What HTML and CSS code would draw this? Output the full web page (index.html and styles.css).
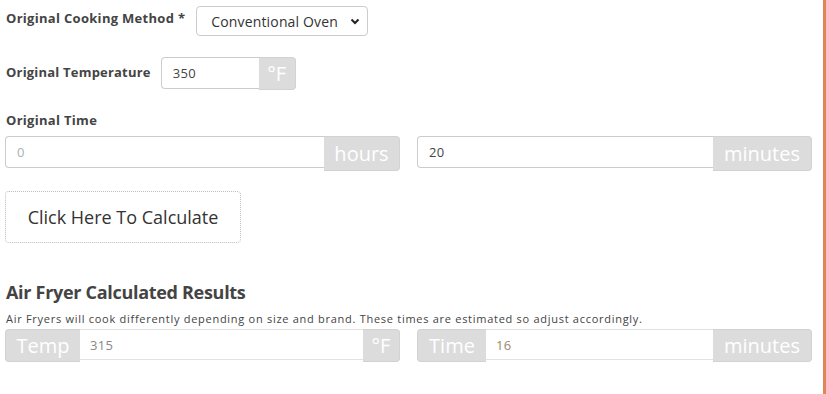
FILE: index.html
```html
<!DOCTYPE html>
<html>
<head>
<meta charset="utf-8">
<link rel="stylesheet" href="styles.css">
</head>
<body>
<div class="page">
  <main class="calc">
    <div class="row row-method">
      <label class="lbl">Original Cooking Method *</label>
      <div class="select">Conventional Oven
        <svg class="chev" width="10" height="7" viewBox="0 0 10 7"><path d="M1.5 1.5 L5 5 L8.5 1.5" fill="none" stroke="#222" stroke-width="2"/></svg>
      </div>
    </div>
    <div class="row row-temp">
      <label class="lbl">Original Temperature</label>
      <div class="group">
        <div class="field temp-field">350</div>
        <div class="addon addon-f">°F</div>
      </div>
    </div>
    <div class="lbl time-lbl">Original Time</div>
    <div class="pair">
      <div class="group">
        <div class="field grow placeholder">0</div>
        <div class="addon addon-hours">hours</div>
      </div>
      <div class="group">
        <div class="field grow">20</div>
        <div class="addon addon-min">minutes</div>
      </div>
    </div>
    <button class="calc-btn">Click Here To Calculate</button>
    <h2 class="res-title">Air Fryer Calculated Results</h2>
    <p class="note">Air Fryers will cook differently depending on size and brand. These times are estimated so adjust accordingly.</p>
    <div class="pair result">
      <div class="group">
        <div class="addon r-left r-temp">Temp</div>
        <div class="field r-field grow val-grey">315</div>
        <div class="addon r-right r-f">°F</div>
      </div>
      <div class="group">
        <div class="addon r-left r-time">Time</div>
        <div class="field r-field grow val-tan">16</div>
        <div class="addon r-right r-min">minutes</div>
      </div>
    </div>
  </main>
  <div class="edge"></div>
</div>
</body>
</html>
```
FILE: styles.css
```css
html, body { margin: 0; padding: 0; background: #fff; }
body { font-family: "Open Sans", "DejaVu Sans", sans-serif; color: #444; }
.page { display: flex; height: 394px; }
.calc { width: 807px; padding-left: 5px; box-sizing: content-box; }
.edge { margin-left: 11px; width: 3px; background: #e0845a; height: 394px; }

.row { display: flex; align-items: center; }
.row-method { padding-top: 6px; height: 30px; }
.lbl { font-size: 13px; font-weight: 700; color: #444; padding-left: 1px; letter-spacing: 0.3px; }
.row-method .lbl { margin-right: 11px; margin-top: -6px; }
.select {
  box-sizing: border-box; height: 30px; width: 172px; border: 1px solid #ccc; border-radius: 4px;
  display: flex; align-items: center; padding-left: 14px; font-size: 14px; color: #333; position: relative;
  letter-spacing: 0.15px;
}
.chev { position: absolute; right: 7px; top: 11px; }

.row-temp { margin-top: 21px; }
.row-temp .lbl { margin-right: 10px; margin-top: -4px; letter-spacing: 0.2px; }
.group { display: flex; align-items: flex-start; }
.field {
  box-sizing: border-box; height: 32px; border: 1px solid #ccc; border-right: none;
  border-radius: 4px 0 0 4px; font-size: 13px; color: #444; padding-left: 11px;
  display: flex; align-items: center; letter-spacing: 0.3px;
}
.temp-field { width: 98px; }
.grow { flex: 1; }
.placeholder { color: #a8b0b4; }
.addon {
  box-sizing: border-box; height: 35px; background: #dcdcdc; color: #fff; font-size: 20px;
  border-radius: 0 4px 4px 0; display: flex; align-items: center; justify-content: center;
  border: 1px solid #d2d2d2; border-left: none;
}
.addon-f { width: 37px; height: 33px; }
.addon-hours { width: 76px; }
.addon-min { width: 99px; }

.time-lbl { margin-top: 21px; height: 18px; line-height: 18px; }
.pair { display: grid; grid-template-columns: 1fr 1fr; column-gap: 17px; margin-top: 7px; }

.calc-btn {
  display: block; margin-top: 20px; width: 236px; height: 52px; background: #fff;
  border: 1px dotted #bdbdbd; border-radius: 4px; font-family: "Open Sans", sans-serif;
  font-size: 18px; color: #333; padding: 0;
}

.res-title { margin: 38px 0 0 1px; font-size: 18px; font-weight: 700; color: #444; line-height: 22px; letter-spacing: -0.3px; }
.note { margin: 9px 0 0 1px; font-size: 11px; color: #444; line-height: 14px; letter-spacing: 0.72px; }
.result { margin-top: 3px; }
.result .addon { height: 33px; }
.r-left { border-radius: 4px 0 0 4px; border: 1px solid #d2d2d2; border-right: none; }
.r-right { border-radius: 0 4px 4px 0; }
.r-field { height: 31px; border: 1px solid #e2e2e2; border-left: none; border-right: none; border-radius: 0; padding-left: 10px; font-size: 13px; }
.r-temp { width: 75px; }
.r-f { width: 37px; }
.r-time { width: 69px; }
.r-min { width: 99px; }
.val-grey { color: #888; }
.val-tan { color: #a08a68; }
```
